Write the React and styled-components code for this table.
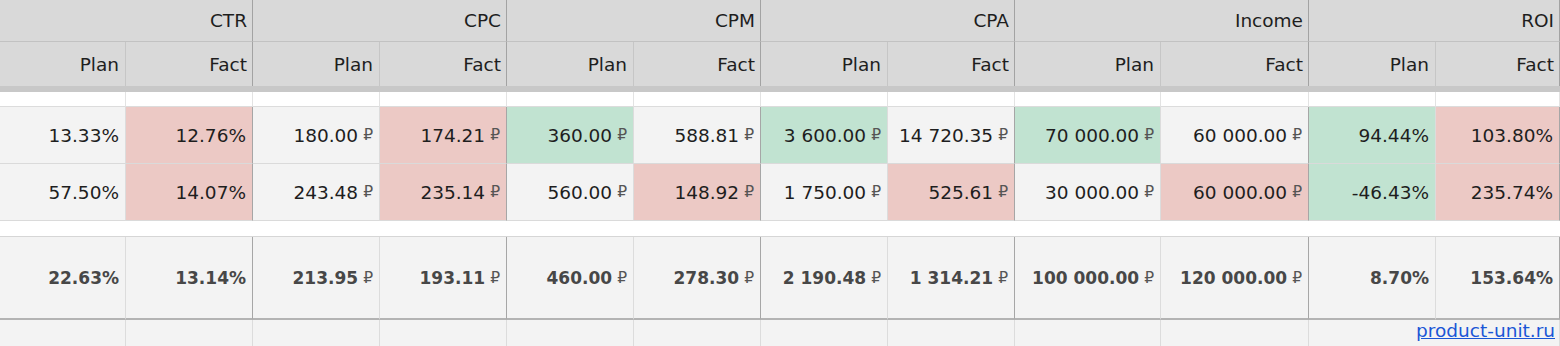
import styled, { createGlobalStyle, css } from 'styled-components';

const GlobalStyle = createGlobalStyle`
  html, body {
    margin: 0;
    padding: 0;
    background: #ffffff;
  }
  body {
    font-family: 'DejaVu Sans', Verdana, sans-serif;
    overflow: hidden;
  }
`;

const COLUMNS = '126px 127px 127px 127px 127px 127px 127px 127px 146px 148px 127px 124px';

const groups = ['CTR', 'CPC', 'CPM', 'CPA', 'Income', 'ROI'];

const rows = [
  [
    ['13.33%'], ['12.76%', 'bad'], ['180.00', null, true], ['174.21', 'bad', true],
    ['360.00', 'good', true], ['588.81', null, true], ['3 600.00', 'good', true], ['14 720.35', null, true],
    ['70 000.00', 'good', true], ['60 000.00', null, true], ['94.44%', 'good'], ['103.80%', 'bad'],
  ],
  [
    ['57.50%'], ['14.07%', 'bad'], ['243.48', null, true], ['235.14', 'bad', true],
    ['560.00', null, true], ['148.92', 'bad', true], ['1 750.00', null, true], ['525.61', 'bad', true],
    ['30 000.00', null, true], ['60 000.00', 'bad', true], ['-46.43%', 'good'], ['235.74%', 'bad'],
  ],
];

const totals = [
  ['22.63%'], ['13.14%'], ['213.95', true], ['193.11', true],
  ['460.00', true], ['278.30', true], ['2 190.48', true], ['1 314.21', true],
  ['100 000.00', true], ['120 000.00', true], ['8.70%'], ['153.64%'],
];

const tones = {
  bad: '#ecc9c5',
  good: '#c1e3d1',
};

export default function App() {
  return (
    <>
      <GlobalStyle />
      <Sheet>
        <Row>
          {groups.map((g) => (
            <GroupCell key={g}>{g}</GroupCell>
          ))}
        </Row>
        <Row>
          {groups.map((g) => [
            <SubCell key={g + 'p'}>Plan</SubCell>,
            <SubCell key={g + 'f'} $edge>Fact</SubCell>,
          ])}
        </Row>
        <FrozenBand />
        <Row>
          {Array.from({ length: 12 }).map((_, i) => (
            <BlankCell key={i} />
          ))}
        </Row>
        {rows.map((r, ri) => (
          <Row key={ri}>
            {r.map(([value, tone, rub], i) => (
              <DataCell key={i} $tone={tone} $edge={i % 2 === 1}>
                {value}
                {rub && <Rub>₽</Rub>}
              </DataCell>
            ))}
          </Row>
        ))}
        <Gap />
        <Row>
          {totals.map(([value, rub], i) => (
            <TotalCell key={i} $edge={i % 2 === 1}>
              {value}
              {rub && <Rub>₽</Rub>}
            </TotalCell>
          ))}
        </Row>
        <Row>
          {Array.from({ length: 10 }).map((_, i) => (
            <FooterCell key={i} />
          ))}
          <FooterCell $span={2}>
            <SiteLink href="#">product-unit.ru</SiteLink>
          </FooterCell>
        </Row>
      </Sheet>
    </>
  );
}

const Sheet = styled.div`
  width: 1560px;
  overflow: hidden;
  font-size: 18.5px;
  color: #1e1e1e;
`;

const Row = styled.div`
  display: grid;
  grid-template-columns: ${COLUMNS};
`;

const cellBase = css`
  box-sizing: border-box;
  display: flex;
  align-items: center;
  justify-content: flex-end;
  padding-right: 6px;
  white-space: nowrap;
`;

const GroupCell = styled.div`
  ${cellBase};
  grid-column: span 2;
  height: 42px;
  padding-right: 5px;
  background: #d9d9d9;
  border-right: 1px solid #a3a3a3;
  border-bottom: 1px solid #c2c2c2;
`;

const SubCell = styled.div`
  ${cellBase};
  height: 44px;
  background: #d9d9d9;
  border-right: 1px solid ${(p) => (p.$edge ? '#a3a3a3' : '#c6c6c6')};
  padding-right: ${(p) => (p.$edge ? '5px' : '6px')};
`;

const FrozenBand = styled.div`
  height: 6px;
  background: #c8c8c8;
`;

const BlankCell = styled.div`
  box-sizing: border-box;
  height: 15px;
  background: #ffffff;
  border-right: 1px solid #e3e3e3;
  border-bottom: 1px solid #dcdcdc;
`;

const DataCell = styled.div`
  ${cellBase};
  height: 57px;
  background: ${(p) => (p.$tone ? tones[p.$tone] : '#f3f3f3')};
  border-right: 1px solid ${(p) => (p.$edge ? '#a6a6a6' : '#dcdcdc')};
  border-bottom: 1px solid #dadada;
  color: #1e1e1e;
`;

const Gap = styled.div`
  box-sizing: border-box;
  height: 16px;
  background: #ffffff;
  border-bottom: 1px solid #d6d6d6;
`;

const TotalCell = styled.div`
  ${cellBase};
  height: 83px;
  background: #f3f3f3;
  border-right: 1px solid ${(p) => (p.$edge ? '#a6a6a6' : '#dcdcdc')};
  border-bottom: 2px solid #b3b3b3;
  font-size: 17px;
  font-weight: 700;
  color: #474747;
`;

const FooterCell = styled.div`
  ${cellBase};
  grid-column: span ${(p) => p.$span || 1};
  align-items: flex-start;
  height: 40px;
  padding-right: 4px;
  background: #f3f3f3;
  border-right: 1px solid #dcdcdc;
`;

const Rub = styled.span`
  margin-left: 5px;
  font-size: 15.5px;
  font-weight: 400;
  color: #555555;
`;

const SiteLink = styled.a`
  line-height: 22px;
  color: #1a56d6;
  text-decoration: underline;
`;
